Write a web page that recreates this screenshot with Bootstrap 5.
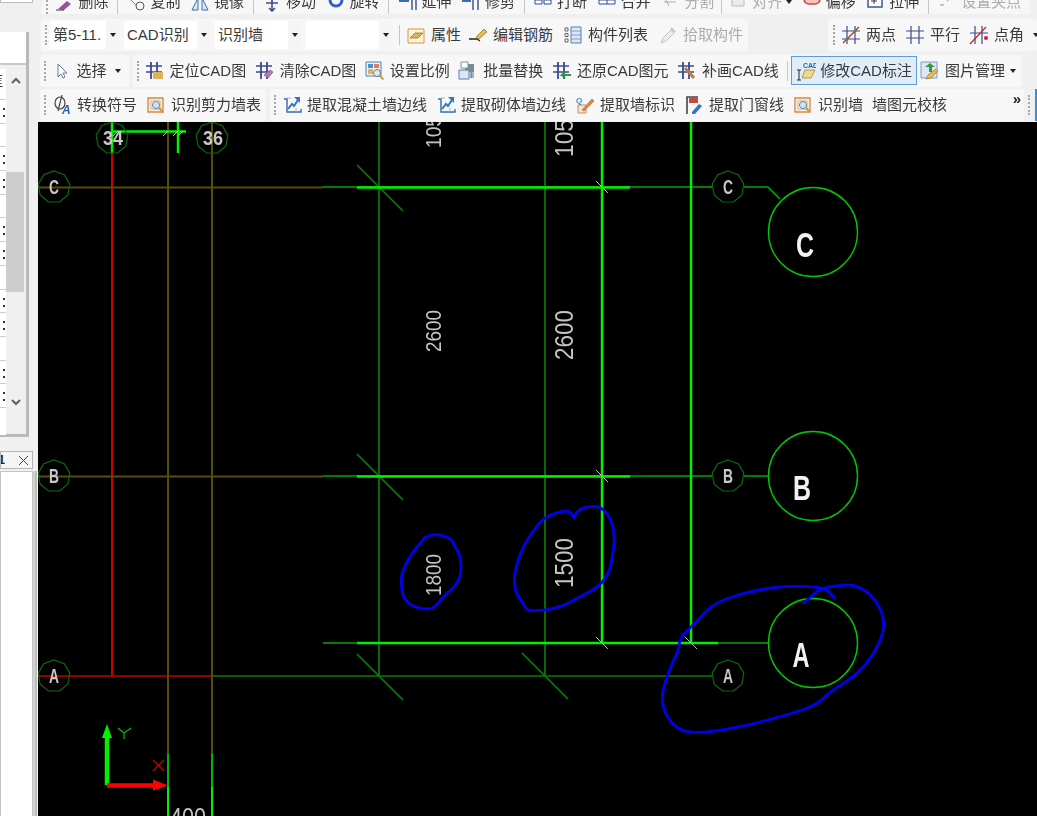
<!DOCTYPE html>
<html lang="zh-CN">
<head>
  <meta charset="UTF-8" />
  <meta name="viewport" content="width=device-width, initial-scale=1.0" />
  <title>CAD识别</title>
  <link rel="stylesheet" href="https://cdn.jsdelivr.net/npm/bootstrap@5.3.0/dist/css/bootstrap.min.css" />
  <style>
    html, body { height: 816px; overflow: hidden; }
    body { background: #f0f0f0; color: #3a3a3a; font: 15px/20px "Liberation Sans", "Noto Sans CJK SC", sans-serif; }
    .app { width: 1037px; height: 816px; }

    /* left dock */
    .dock { width: 38px; flex: none; }
    .dock-cap { width: 33px; height: 3px; background: #fff; border: 1px solid #bbb; border-top: 0; }
    .dock-gap { height: 29px; }
    .dock-panel { width: 29px; height: 405px; border-right: 3px solid #b9b9b9; border-bottom: 3px solid #b9b9b9; }
    .dock-title { height: 33px; background: #fff; border-bottom: 2px solid #c8c8c8; }
    .dock-list { height: 370px; padding-top: 4px; }
    .list-col { width: 6px; background: #fff; overflow: hidden; }
    .list-head { height: 31px; font-size: 14px; line-height: 24px; white-space: nowrap; margin-left: -11px; border-bottom: 1px solid #ccc; }
    .list-row { height: 23.7px; border-bottom: 1px solid #ccc; position: relative; }
    .list-row.has-dots::before, .list-row.has-dots::after { content: ""; position: absolute; left: 3px; width: 2px; height: 2px; background: #333; }
    .list-row.has-dots::before { top: 8px; }
    .list-row.has-dots::after { top: 15px; }
    .scroll-col { width: 20px; padding-top: 4px; }
    .thumb { height: 120px; background: #cdcdcd; margin: 87px 2px 106px 0; }
    .scroll-col svg { display: block; margin: 0 auto; }
    .dock-tab { width: 33px; height: 18px; margin-top: 14px; background: #f5f5f5; border: 1px solid #b5b5b5; overflow: hidden; }
    .dock-tab svg { margin-left: 17px; margin-top: 3px; flex: none; }
    .tab-clip { font-weight: 700; font-size: 12px; line-height: 16px; width: 4px; flex: none; margin-right: -4px; direction: rtl; overflow: hidden; color: #222; }
    .dock-body { flex: 1; margin-top: 2px; background: #fff; width: 33px; border: 1px solid #c4c4c4; border-bottom: 0; box-shadow: 2px 0 0 #d2d2d2, 4px 0 0 #bdbdbd; }

    /* toolbars */
    .main-col { flex: 1; min-width: 0; }
    .bars { height: 122px; filter: blur(.35px); }
    .tbar-row { display: flex; align-items: center; white-space: nowrap; }
    .tbar-row-0 { height: 17px; align-items: flex-start; overflow: hidden; }
    .tbar-row-1 { height: 36px; }
    .tbar-row-2 { height: 35px; }
    .tbar-row-3 { height: 34px; }
    .seg { display: flex; align-items: center; gap: 9px; height: 32px; padding-left: 4px; background: #f7f7f7; border-radius: 3px; flex: none; }
    .tbar-row-0 .seg { height: 14px; margin-left: 4px; width: 988px; gap: 9.5px; overflow: hidden; }
    .tbar-row-2 .seg { gap: 8.5px; }
    .tbar-row-0 .rule { margin: 0 -1px; }
    .tbar-row-0 .rule.snug { margin: 0 -3px; }
    .seg-edit { width: 707px; margin-left: 3px; }
    .seg-grid { width: 209px; padding-left: 5px; }
    .seg-pick { width: 89px; margin-left: 2px; }
    .seg-cad { width: 889px; margin-left: 4px; }
    .seg-sym { width: 226px; margin-left: 2px; }
    .seg-wall { width: 754px; margin-left: 4px; }
    .tool { display: inline-flex; align-items: center; gap: 5px; height: 24px; flex: none; }
    .tbar-row-0 .tool { margin-top: -10px; gap: 4px; }
    .tool svg { width: 20px; height: 20px; flex: none; }
    .tool.off { color: #acacac; }
    .tool.off svg { opacity: .45; }
    .tool.on { height: 29px; gap: 4px; padding: 0 4px; background: #e0edf8; border: 1px solid #5a9fdc; margin: 0 -5.5px; }
    .nudge-back { margin-left: -2px; }
    .nudge-on { margin-left: 1px; }
    .grip { width: 3px; height: 20px; flex: none; margin-right: -4px; border-left: 2px dotted #a8a8a8; }
    .rule { width: 1px; height: 20px; background: #c6c6c6; flex: none; }
    .rule-combo { margin: 0 -3px 0 -3px; }
    .caret-dn { width: 0; height: 0; border: 3.5px solid transparent; border-top: 4px solid #222; border-bottom: 0; flex: none; }
    .combo-group { margin-left: -3px; }
    .combo { display: flex; align-items: center; justify-content: space-between; height: 28px; background: #fff; padding: 0 4px 0 3px; flex: none; }
    .combo-s { width: 70px; }
    .combo-m { width: 87px; }
    .combo-arrow { display: flex; align-items: center; justify-content: center; width: 14px; height: 28px; background: #f5f5f5; margin-right: -4px; }
    .more { font-size: 15px; font-weight: 700; line-height: 12px; color: #222; margin: -12px 3px 0 auto; }
    .edge-tab { width: 2px; height: 32px; margin-left: 3px; background: #3a8fd8; flex: none; }

    /* drawing */
    .canvas { flex: 1; background: #000; min-height: 0; }
    .canvas svg { display: block; }
    .axis-ring { fill: none; stroke: #0b6b0b; stroke-width: 1.2; }
    .cad-txt { font-family: "Liberation Sans", sans-serif; fill: #c4c4c4; filter: blur(.35px); }
    .axis-txt { font-family: "Liberation Sans", sans-serif; font-weight: 700; fill: #c8c8c8; filter: blur(.35px); }
    .big-txt { font-family: "Liberation Sans", sans-serif; font-weight: 700; fill: #f2f2f2; filter: blur(.35px); }
    .ink { fill: none; stroke: #0000ee; stroke-width: 2.8; stroke-linecap: round; stroke-linejoin: round; }
  </style>
</head>
<body>
  <svg width="0" height="0" class="position-absolute">
    <defs>
      <symbol id="i-bar" viewBox="0 0 20 20"><path d="M1 5h16M1 11h16" stroke="#3b4a8f" stroke-width="1.300" fill="none"/><path d="M6 1v17M12 1v17" stroke="#3b4a8f" stroke-width="1.800" fill="none"/></symbol>
      <symbol id="i-note" viewBox="0 0 20 20"><path d="M2 4h16v14H2z" fill="#fdf3dc" stroke="#e0973a"/><path d="M4 13l5-5h8l-5 5z" fill="#d9b45a" stroke="#8a6a20" stroke-width=".7"/></symbol>
      <symbol id="i-wall" viewBox="0 0 20 20"><path d="M2 4h3v13h14v-3" fill="none" stroke="#3c6aa8" stroke-width="1.400"/><path d="M5 3h4M14 17v-4" stroke="#9ab0d0"/><path d="M6 14l4-5 2 2 4-6" stroke="#2a7ac8" stroke-width="2" fill="none"/><path d="M12 2h6v6z" fill="#2a7ac8"/></symbol>
      <symbol id="i-scan" viewBox="0 0 20 20"><path d="M2 3h15v14H2z" fill="#f4ede0" stroke="#d88a45" stroke-width="1.400"/><path d="M5 6h9v8H5z" fill="#fff" stroke="#c9a27a" stroke-width=".8"/><circle cx="10" cy="10" r="3.600" fill="#cfe2f3" stroke="#6c86a3"/><path d="M13 13l4 4" stroke="#c89a3a" stroke-width="2"/></symbol>
      <polygon id="bubble" points="0,-16 10.300,-12.300 15.800,-2.800 13.900,8 5.500,15 -5.500,15 -13.900,8 -15.800,-2.800 -10.300,-12.300"/>
    </defs>
  </svg>

  <div class="app d-flex">
    <!-- dock on the left -->
    <aside class="dock d-flex flex-column">
      <div class="dock-cap"></div>
      <div class="dock-gap"></div>
      <div class="dock-panel">
        <div class="dock-title"></div>
        <div class="dock-list d-flex">
          <div class="list-col">
            <div class="list-head">匪</div>
            <div class="list-row has-dots"></div>
            <div class="list-row"></div>
            <div class="list-row has-dots"></div>
            <div class="list-row has-dots"></div>
            <div class="list-row"></div>
            <div class="list-row has-dots"></div>
            <div class="list-row has-dots"></div>
            <div class="list-row"></div>
            <div class="list-row has-dots"></div>
            <div class="list-row has-dots"></div>
            <div class="list-row"></div>
            <div class="list-row has-dots"></div>
            <div class="list-row has-dots"></div>
          </div>
          <div class="scroll-col">
            <svg width="12" height="8" class="mt-1" viewBox="0 0 12 8"><path d="M2 6l4-4 4 4" fill="none" stroke="#606060" stroke-width="2"/></svg>
            <div class="thumb"></div>
            <svg width="12" height="8" viewBox="0 0 12 8"><path d="M2 2l4 4 4-4" fill="none" stroke="#606060" stroke-width="2"/></svg>
          </div>
        </div>
      </div>
      <div class="dock-tab d-flex">
        <span class="tab-clip">1</span>
        <svg width="11" height="11" viewBox="0 0 11 11"><path d="M1 1l9 9M10 1l-9 9" stroke="#444" stroke-width="1"/></svg>
      </div>
      <div class="dock-body"></div>
    </aside>

    <div class="main-col d-flex flex-column">
      <div class="bars">
        <!-- row 0, cut off by the top of the window -->
        <div class="tbar-row tbar-row-0">
          <div class="seg">
            <span class="grip"></span>
            <span class="tool"><svg viewBox="0 0 20 20"><path d="M3 17l9-8 4 3-7 6z" fill="#9b4fa0"/><path d="M1 18h8" stroke="#333"/></svg>删除</span>
            <span class="rule"></span>
            <span class="tool"><svg viewBox="0 0 20 20"><circle cx="13" cy="14" r="4" fill="none" stroke="#555"/><path d="M4 8l5 5" stroke="#888"/></svg>复制</span>
            <span class="tool"><svg viewBox="0 0 20 20"><path d="M2 18l6-12v12zM18 18l-6-12v12z" fill="#dce8f6" stroke="#3c6aa8"/></svg>镜像</span>
            <span class="rule"></span>
            <span class="tool"><svg viewBox="0 0 20 20"><path d="M10 6v12M4 11h12M7 16l3 3 3-3" fill="none" stroke="#3b4a8f" stroke-width="1.600"/></svg>移动</span>
            <span class="tool"><svg viewBox="0 0 20 20"><circle cx="10" cy="8" r="6" fill="none" stroke="#2f62c0" stroke-width="3"/></svg>旋转</span>
            <span class="rule"></span>
            <span class="tool"><svg viewBox="0 0 20 20"><path d="M1 9h10" stroke="#3b6bb0" stroke-width="2"/><path d="M14 1v17M18 1v17" stroke="#3b4a8f" stroke-width="1.400"/></svg>延伸</span>
            <span class="tool"><svg viewBox="0 0 20 20"><path d="M1 9h9" stroke="#3b6bb0" stroke-width="2"/><path d="M12 1v17M17 1v17" stroke="#3b4a8f" stroke-width="1.400"/></svg>修剪</span>
            <span class="rule"></span>
            <span class="tool"><svg viewBox="0 0 20 20"><path d="M2 8h7v4H2zM11 8h7v4h-7z" fill="#fff" stroke="#3b4a8f"/></svg>打断</span>
            <span class="tool"><svg viewBox="0 0 20 20"><path d="M2 8h16v4H2z" fill="#fff" stroke="#3b4a8f"/><path d="M10 8v4" stroke="#3b4a8f"/></svg>合并</span>
            <span class="tool off"><svg viewBox="0 0 20 20"><path d="M2 6h16M4 10h12M3 2l6 12" stroke="#555" fill="none"/></svg>分割</span>
            <span class="rule snug"></span>
            <span class="tool off"><svg viewBox="0 0 20 20"><path d="M4 2h12v12H4z" fill="#ddd" stroke="#777"/></svg>对齐<span class="caret-dn"></span></span>
            <span class="tool"><svg viewBox="0 0 20 20"><rect x="2" y="1" width="16" height="11" rx="5" fill="#f6c5bd" stroke="#c64a3a" stroke-width="1.500"/></svg>偏移</span>
            <span class="tool"><svg viewBox="0 0 20 20"><path d="M3 1h14v14H3z" fill="#fff" stroke="#3c5a90" stroke-width="1.500"/><path d="M9 6v6M6 9h6" stroke="#333"/></svg>拉伸</span>
            <span class="rule"></span>
            <span class="tool off"><svg viewBox="0 0 20 20"><path d="M3 13h4M10 9l6-6" stroke="#666" stroke-width="1.600"/></svg>设置夹点</span>
          </div>
        </div>

        <!-- row 1 -->
        <div class="tbar-row tbar-row-1">
          <div class="seg seg-edit">
            <span class="grip"></span>
            <div class="combo-group d-flex gap-1">
              <span class="combo combo-s">第5-11.<span class="combo-arrow"><span class="caret-dn"></span></span></span>
              <span class="combo combo-m">CAD识别<span class="combo-arrow"><span class="caret-dn"></span></span></span>
              <span class="combo combo-m">识别墙<span class="combo-arrow"><span class="caret-dn"></span></span></span>
              <span class="combo combo-m"><span class="combo-arrow ms-auto"><span class="caret-dn"></span></span></span>
            </div>
            <span class="rule rule-combo"></span>
            <span class="tool"><svg><use href="#i-note"/></svg>属性</span>
            <span class="tool nudge-back"><svg viewBox="0 0 20 20"><path d="M1 14h8l3 2" fill="none" stroke="#222" stroke-width="1.300"/><path d="M8 12l8-8 3 3-8 7z" fill="#e8b94c" stroke="#8b6b1e" stroke-width=".7"/></svg>编辑钢筋</span>
            <span class="tool nudge-on"><svg viewBox="0 0 20 20"><path d="M2 3h3v3H2zM2 8.500h3v3H2zM2 14h3v3H2z" fill="none" stroke="#666"/><path d="M8 2h10v16H8z" fill="#dbe7f5" stroke="#5b7fb0"/><path d="M8 6h10M8 10h10M8 14h10" stroke="#5b7fb0" stroke-width=".7"/></svg>构件列表</span>
            <span class="tool off nudge-on"><svg viewBox="0 0 20 20"><path d="M3 18l2-5 8-8 3 3-8 8z" fill="#ddd" stroke="#888"/><path d="M13 3l4 4" stroke="#888" stroke-width="2"/></svg>拾取构件</span>
          </div>
          <div class="seg seg-grid ms-auto">
            <span class="grip"></span>
            <span class="tool"><svg viewBox="0 0 20 20"><path d="M6 1v18M14 1v18M1 6h18M1 14h18" stroke="#3b4a8f" stroke-width="1.200"/><path d="M2 18L18 2" stroke="#d02020" stroke-width="1.200"/><circle cx="6" cy="14" r="1.600" fill="#3a9a3a"/><circle cx="14" cy="6" r="1.600" fill="#3a9a3a"/></svg>两点</span>
            <span class="tool"><svg viewBox="0 0 20 20"><path d="M6 1v18M14 1v18M1 6h18M1 13h18" stroke="#3b4a8f" stroke-width="1.200"/></svg>平行</span>
            <span class="tool"><svg viewBox="0 0 20 20"><path d="M6 1v18M13 1v18M1 8h18" stroke="#3b4a8f" stroke-width="1.200"/><path d="M1 19L17 2" stroke="#d02020" stroke-width="1.200"/><circle cx="17" cy="13" r="2" fill="#d02020"/></svg>点角</span>
            <span class="caret-dn"></span>
          </div>
        </div>

        <!-- row 2 -->
        <div class="tbar-row tbar-row-2">
          <div class="seg seg-pick">
            <span class="grip"></span>
            <span class="tool"><svg viewBox="0 0 20 20"><path d="M6 3v13l3-3 2 4 2-1-2-4h4z" fill="#fff" stroke="#6a7a94"/></svg>选择</span>
            <span class="caret-dn"></span>
          </div>
          <div class="seg seg-cad">
            <span class="grip"></span>
            <span class="tool"><svg viewBox="0 0 20 20"><use href="#i-bar" width="20" height="20"/><path d="M8 11h10v7H8z" fill="#d9b45a"/></svg>定位CAD图</span>
            <span class="tool"><svg viewBox="0 0 20 20"><use href="#i-bar" width="20" height="20"/><path d="M9 14l6-5 3 2-5 6z" fill="#b57ab5" stroke="#6a4a6a" stroke-width=".6"/></svg>清除CAD图</span>
            <span class="tool"><svg viewBox="0 0 20 20"><path d="M1 1h15v14H1z" fill="#eef3fb" stroke="#4a80c0"/><path d="M3 3h5v4H3z" fill="#4a90d0"/><path d="M9 3h5v4H9z" fill="#e07a5a"/><path d="M3 8h5v5H3z" fill="#d9b45a"/><circle cx="12" cy="12" r="3.500" fill="#dfeaf5" stroke="#777"/><path d="M14.500 14.500l4 4" stroke="#d09a3a" stroke-width="2"/></svg>设置比例</span>
            <span class="tool"><svg viewBox="0 0 20 20"><path d="M7 3h9v14H7z" fill="#7a8a98"/><path d="M1 9h10v9H1z" fill="#dbe7f5" stroke="#5b7fb0"/><path d="M3 1h7v6H3z" fill="#fff" stroke="#7a9a7a"/><path d="M9 11v6M12 11v6M15 11v6" stroke="#eef" stroke-width=".8"/></svg>批量替换</span>
            <span class="tool"><svg viewBox="0 0 20 20"><use href="#i-bar" width="20" height="20"/><path d="M19 14H10l3-3M10 14l3 3" fill="none" stroke="#2f9a3a" stroke-width="2"/></svg>还原CAD图元</span>
            <span class="tool"><svg viewBox="0 0 20 20"><use href="#i-bar" width="20" height="20"/><path d="M8 7l9 10" stroke="#c07a3a" stroke-width="3"/></svg>补画CAD线</span>
            <span class="rule"></span>
            <span class="tool on"><svg viewBox="0 0 20 20"><path d="M3 9v10M1 9h4M1 19h4" stroke="#222" fill="none"/><path d="M6 17l3-8h10l-4 8z" fill="#f0d890" stroke="#a88a30" stroke-width=".8"/><text x="7" y="7" font-size="7" font-weight="700" fill="#2a62b0" font-family="Liberation Sans, sans-serif">CAD</text></svg>修改CAD标注</span>
            <span class="tool"><svg viewBox="0 0 20 20"><path d="M1 1h16v16H1z" fill="#dbe7f5" stroke="#7a9ac8"/><path d="M9 11V6H5l5-4 5 4h-3v5z" fill="#3a9a3a"/><path d="M6 18l2-4 8-6 2 2-7 7z" fill="#e8b94c" stroke="#8b6b1e" stroke-width=".6"/></svg>图片管理<span class="caret-dn"></span></span>
          </div>
        </div>

        <!-- row 3 -->
        <div class="tbar-row tbar-row-3">
          <div class="seg seg-sym">
            <span class="grip"></span>
            <span class="tool"><svg viewBox="0 0 20 20"><ellipse cx="8" cy="8" rx="5" ry="6" fill="none" stroke="#444" stroke-width="1.200"/><path d="M10 0L6 16" stroke="#444" stroke-width="1.200"/><text x="10" y="19" font-size="12" font-weight="700" font-style="italic" fill="#2a62b0" font-family="Liberation Sans, sans-serif">A</text></svg>转换符号</span>
            <span class="tool"><svg><use href="#i-scan"/></svg>识别剪力墙表</span>
          </div>
          <div class="seg seg-wall">
            <span class="grip"></span>
            <span class="tool"><svg><use href="#i-wall"/></svg>提取混凝土墙边线</span>
            <span class="tool"><svg><use href="#i-wall"/></svg>提取砌体墙边线</span>
            <span class="tool"><svg viewBox="0 0 20 20"><path d="M3 10h8v8H3z" fill="#f7e6d8" stroke="#d88a45"/><path d="M7 15L17 4l2 2-10 10z" fill="#e08a4a" stroke="#a85a2a" stroke-width=".6"/><text x="1" y="8" font-size="8" font-weight="700" fill="#3a8ad0" font-family="Liberation Sans, sans-serif">Q</text></svg>提取墙标识</span>
            <span class="tool"><svg viewBox="0 0 20 20"><path d="M3 19V2h11" fill="none" stroke="#444" stroke-width="1.600"/><path d="M5 3h9v5H5z" fill="#c84a3a"/><path d="M8 17l7-8 3 2-7 8H8z" fill="#3a72c0"/></svg>提取门窗线</span>
            <span class="tool"><svg><use href="#i-scan"/></svg>识别墙</span>
            <span class="tool">墙图元校核</span>
            <span class="more">&raquo;</span>
          </div>
          <div class="grip ms-1"></div>
          <div class="edge-tab ms-2"></div>
        </div>
      </div>

      <!-- drawing area, free canvas in page coordinates -->
      <div class="canvas overflow-hidden">
        <svg width="999" height="694" viewBox="38 122 999 694">
          <!-- dim grid lines -->
          <g fill="none" stroke="#0a7a0a" stroke-width="1.700">
            <path d="M379 122V676M545 122V676"/>
            <path d="M212 676H712"/>
            <path d="M357 165l46 46M357 454l46 46M357 654l46 46M522 653l46 46"/>
          </g>
          <g fill="none" stroke="#00a800" stroke-width="1.700">
            <path d="M323 187H712M323 476H712M323 643H769"/>
            <path d="M744 187H768L780 199M744 476H769"/>
          </g>
          <!-- column lines, red and olive -->
          <path d="M112 153V676" stroke="#f00000" stroke-width="1.700" fill="none"/>
          <path d="M38 676H212" stroke="#c00000" stroke-width="1.700" fill="none"/>
          <path d="M168 122V754M212 122V754M38 187.500H323M38 476.500H323" stroke="#574e00" stroke-width="2" fill="none"/>
          <!-- bright walls -->
          <g fill="none" stroke="#00f000">
            <path d="M602 122V643M691 122V643" stroke-width="2.500"/>
            <path d="M357 187.500H630M357 476.500H630M357 643H718" stroke-width="2.500"/>
            <path d="M112 122V153M178 122V153M113 131.500H186" stroke-width="2.500"/>
            <path d="M168 754V787M212 754V787" stroke-width="1.500"/>
            <path d="M168 787V816M212 787V816" stroke-width="2"/>
          </g>
          <!-- tick marks -->
          <path d="M596 181l12 12M596 470l12 12M596 637l12 12M685 637l12 12M113 136l5-5M163 136l5-5M173 136l5-5M178 136l5-5" stroke="#b8b8b8" stroke-width="1" fill="none"/>
          <!-- axis bubbles -->
          <g class="axis-ring">
            <use href="#bubble" x="112" y="138"/>
            <use href="#bubble" x="212" y="138"/>
            <use href="#bubble" x="54" y="187"/>
            <use href="#bubble" x="54" y="476"/>
            <use href="#bubble" x="54" y="676"/>
            <use href="#bubble" x="728" y="187"/>
            <use href="#bubble" x="728" y="476"/>
            <use href="#bubble" x="728" y="676"/>
          </g>
          <g class="axis-txt" font-size="20" text-anchor="middle">
            <text x="113" y="145" textLength="20" lengthAdjust="spacingAndGlyphs">34</text>
            <text x="213" y="145" textLength="20" lengthAdjust="spacingAndGlyphs">36</text>
            <text x="54" y="194" textLength="10" lengthAdjust="spacingAndGlyphs">C</text>
            <text x="54" y="483" textLength="10" lengthAdjust="spacingAndGlyphs">B</text>
            <text x="54" y="683" textLength="10" lengthAdjust="spacingAndGlyphs">A</text>
            <text x="728" y="194" textLength="10" lengthAdjust="spacingAndGlyphs">C</text>
            <text x="728" y="483" textLength="10" lengthAdjust="spacingAndGlyphs">B</text>
            <text x="728" y="683" textLength="10" lengthAdjust="spacingAndGlyphs">A</text>
          </g>
          <!-- big bubbles -->
          <g fill="none" stroke="#00c800" stroke-width="1.400">
            <circle cx="813" cy="232" r="44.500"/>
            <circle cx="813" cy="476" r="44.500"/>
            <circle cx="813" cy="643" r="44.500"/>
          </g>
          <g class="big-txt" font-size="35" text-anchor="middle">
            <text x="805" y="257" textLength="18" lengthAdjust="spacingAndGlyphs">C</text>
            <text x="802" y="500" textLength="18" lengthAdjust="spacingAndGlyphs">B</text>
            <text x="801" y="667" textLength="17" lengthAdjust="spacingAndGlyphs">A</text>
          </g>
          <!-- dimensions -->
          <g class="cad-txt" text-anchor="middle">
            <text transform="translate(441 331) rotate(-90)" font-size="22" textLength="42" lengthAdjust="spacingAndGlyphs">2600</text>
            <text transform="translate(573 335) rotate(-90)" font-size="25" textLength="50" lengthAdjust="spacingAndGlyphs">2600</text>
            <text transform="translate(441 575) rotate(-90)" font-size="22" textLength="42" lengthAdjust="spacingAndGlyphs">1800</text>
            <text transform="translate(573 563) rotate(-90)" font-size="25" textLength="50" lengthAdjust="spacingAndGlyphs">1500</text>
            <text transform="translate(441 132) rotate(-90)" font-size="22" textLength="32" lengthAdjust="spacingAndGlyphs">105</text>
            <text transform="translate(573 138) rotate(-90)" font-size="25" textLength="38" lengthAdjust="spacingAndGlyphs">105</text>
            <text x="188" y="826" font-size="25" textLength="36" lengthAdjust="spacingAndGlyphs">400</text>
          </g>
          <!-- UCS marker -->
          <path d="M107 785V735" stroke="#00f000" stroke-width="4.500"/>
          <path d="M107 724l-5 14h10z" fill="#00f000"/>
          <path d="M107 785.500H156" stroke="#ff0000" stroke-width="4.500"/>
          <path d="M168 785.500l-15-6v11z" fill="#ff0000"/>
          <path d="M118 728l6 5 7-5M124 733v6" stroke="#00c000" stroke-width="1.200" fill="none"/>
          <path d="M153 760l11 11M164 760l-11 11" stroke="#d00000" stroke-width="1.200" fill="none"/>
          <!-- hand drawn rings -->
          <path class="ink" id="ink-a"/>
          <path class="ink" id="ink-b"/>
          <path class="ink" id="ink-c"/>
        </svg>
      </div>
    </div>
  </div>

  <script src="https://cdn.jsdelivr.net/npm/bootstrap@5.3.0/dist/js/bootstrap.bundle.min.js"></script>
  <script>
    // pen strokes read off the picture, smoothed through midpoints
    function smooth(id, pts) {
      let d = `M${pts[0][0]} ${pts[0][1]}`;
      for (let i = 1; i < pts.length - 1; i++) {
        const mx = (pts[i][0] + pts[i + 1][0]) / 2;
        const my = (pts[i][1] + pts[i + 1][1]) / 2;
        d += `Q${pts[i][0]} ${pts[i][1]} ${mx} ${my}`;
      }
      const last = pts[pts.length - 1];
      d += `L${last[0]} ${last[1]}`;
      document.getElementById(id).setAttribute('d', d);
    }
    const fromCrop = (ox, oy, list) => list.map(p => [ox + p[0] / 3, oy + p[1] / 3]);

    smooth('ink-a', fromCrop(640, 560, [[584,115],[570,95],[540,82],[470,78],[400,82],[330,95],[250,118],[205,145],[160,195],[120,232],[115,275],[100,300],[65,395],[70,450],[95,490],[130,516],[200,518],[330,495],[450,462],[530,435],[570,395],[650,345],[700,285],[735,210],[725,150],[690,100],[640,72],[590,78],[540,85],[492,128]]));
    smooth('ink-b', fromCrop(380, 490, [[215,150],[200,140],[170,132],[135,140],[125,155],[95,190],[70,235],[62,270],[68,320],[95,350],[150,360],[170,345],[195,315],[230,285],[245,245],[240,195],[225,170],[215,150]]));
    smooth('ink-c', fromCrop(380, 490, [[582,85],[575,65],[550,62],[510,75],[485,90],[450,135],[420,190],[400,265],[410,315],[430,340],[440,362],[490,362],[545,350],[590,325],[640,300],[670,275],[692,235],[698,190],[705,150],[695,90],[665,50],[620,48],[590,65],[582,85]]));
  </script>
</body>
</html>
